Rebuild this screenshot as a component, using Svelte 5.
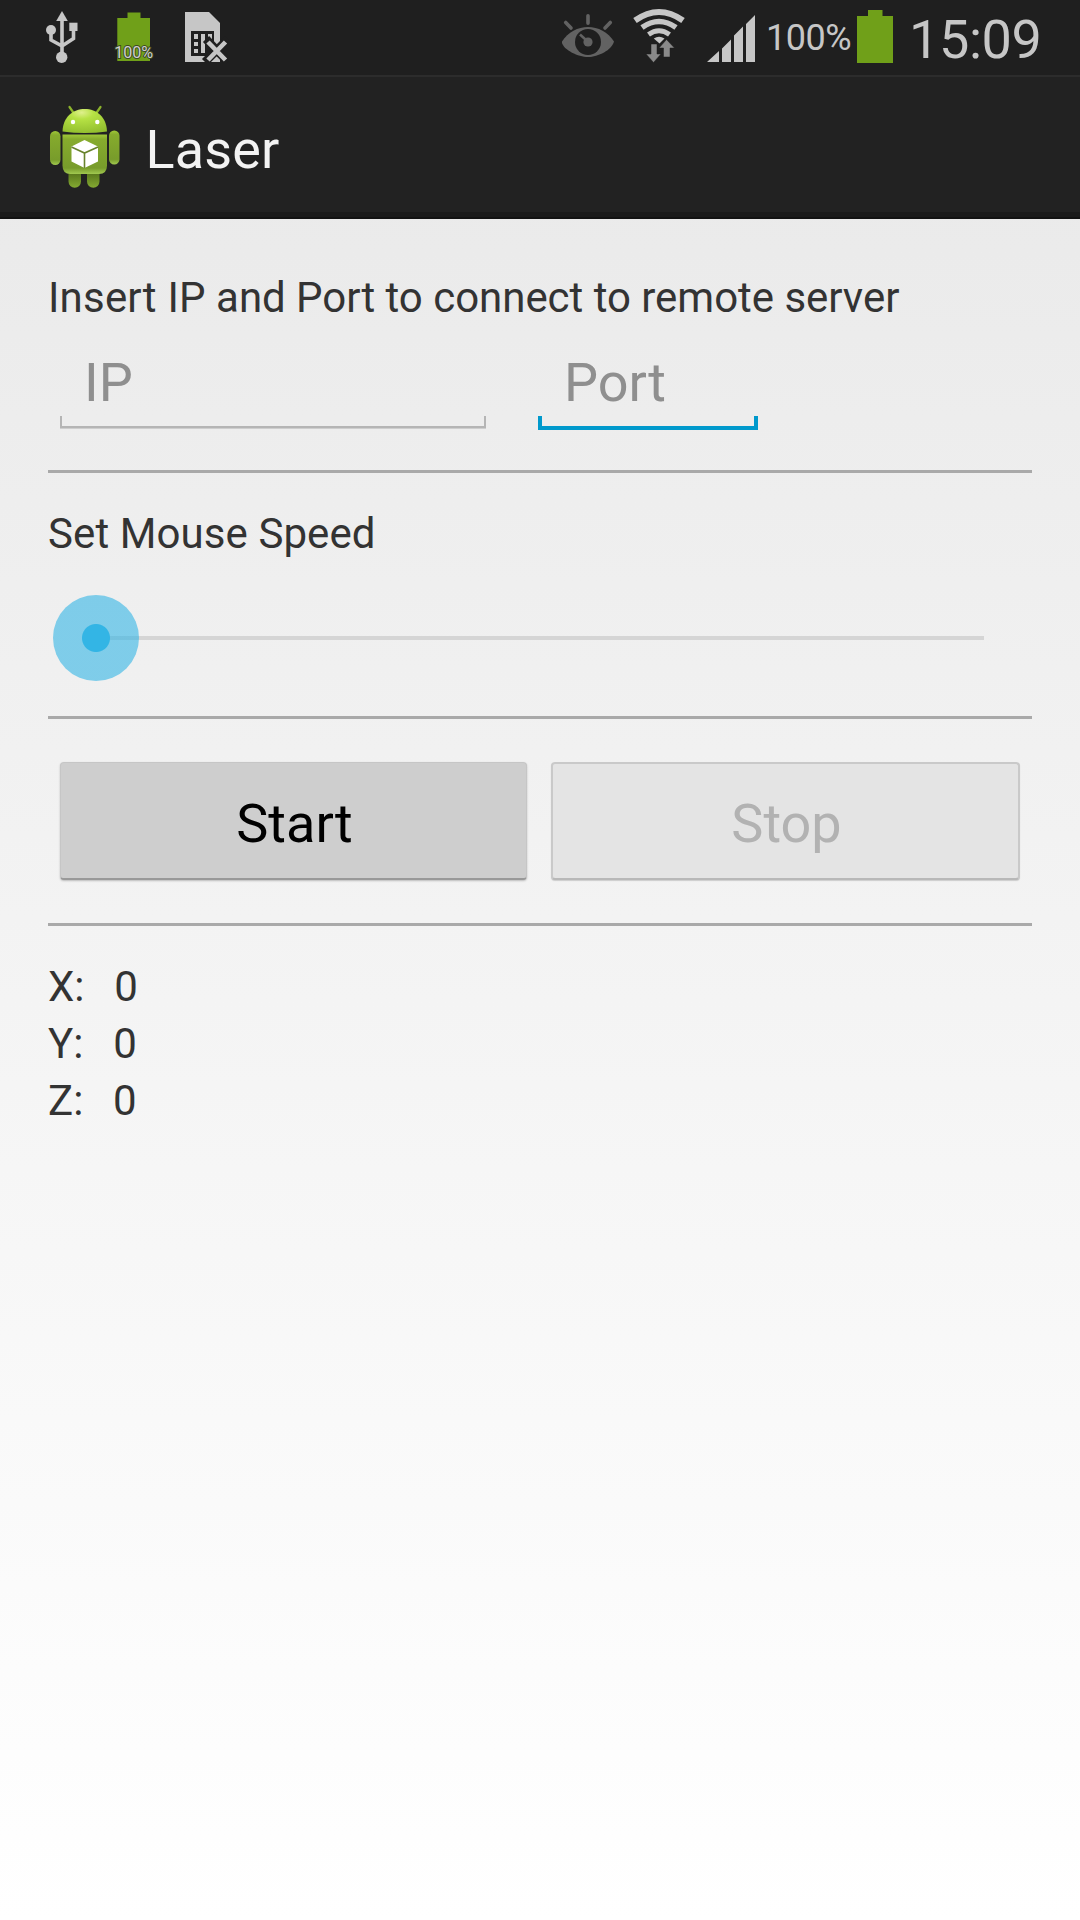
<script>
  let ip = $state('');
  let port = $state('');
  const axes = [
    { name: 'X', value: 0 },
    { name: 'Y', value: 0 },
    { name: 'Z', value: 0 }
  ];
</script>

<div class="screen">
  <header class="status">
    <svg class="usb" viewBox="45 10 34 54">
      <path d="M62 20V54M51 30V40L62 46M73.500 29V38.500L62 46" fill="none" stroke="#c6c6c6" stroke-width="3.600" />
      <path d="M62 11L67.800 21H56.200Z" fill="#c6c6c6" />
      <circle cx="51" cy="30" r="5" fill="#c6c6c6" />
      <circle cx="61.700" cy="57.300" r="5.700" fill="#c6c6c6" />
      <path d="M69.300 22.700h8.200v8.300h-8.200z" fill="#c6c6c6" />
    </svg>
    <svg class="charge" viewBox="112 10 43 54">
      <path d="M127.500 12.500h13v5.500h9.500v43h-32.700V18h10.200z" fill="#70a019" />
      <text class="tiny" x="133.700" y="58.300" text-anchor="middle" textLength="39" lengthAdjust="spacingAndGlyphs">100%</text>
    </svg>
    <svg class="sim" viewBox="183 10 46 54">
      <path d="M185 12h24l11 11v39h-35z" fill="#c6c6c6" />
      <path d="M191 31h23v25h-23z" fill="#1f1f1f" />
      <path d="M194 34h4v5h-4zM194 42h4v4h-4zM194 49h4v4h-4zM201 34h4v19h-4zM208 34h4v5h-4z" fill="#c6c6c6" />
      <path d="M206 39L228 62M228 39L205 62" stroke="#1f1f1f" stroke-width="8.500" />
      <path d="M208 42L225.500 60M225.500 42L208 60" stroke="#c6c6c6" stroke-width="4.600" />
    </svg>
    <span class="grow"></span>
    <svg class="eye" viewBox="560 10 56 54">
      <path d="M562 41.500C568 32 578 27 588 27S608 32 614 41.500C612 50 598 57 588 57S564 50 562 43Z" fill="#626262" />
      <circle cx="588" cy="42" r="13" fill="#1f1f1f" />
      <circle cx="588" cy="42" r="4.600" fill="#626262" />
      <path d="M580 34.500L586 40" stroke="#626262" stroke-width="2.500" />
      <path d="M588 15.800V23.200M565.700 22.500L571 28M610.300 22.500L605 28" stroke="#626262" stroke-width="3.600" stroke-linecap="round" />
    </svg>
    <svg class="wifi" viewBox="631 6 56 58">
      <g fill="none" stroke="#c6c6c6" stroke-width="6">
        <path d="M635 20.500Q659 3.500 683 20.500" />
        <path d="M642 27.500Q659 15.500 676 27.500" stroke-width="5.500" />
        <path d="M648.500 34.500Q659 27 669.500 34.500" stroke-width="5" />
      </g>
      <path d="M653.800 38.500Q659 35 664.500 38.500L659.500 43.500Z" fill="#c6c6c6" />
      <path d="M651 44h6v10h4L653.500 62.500L646 54h5zM666.500 39.500L674.500 48H670v9h-6.500V48H659z" fill="#8a8a8a" stroke="#1f1f1f" stroke-width=".5" />
    </svg>
    <svg class="signal" viewBox="706 10 50 54">
      <path d="M707 62L719 51V62zM722 48.500L731 39.500V62H722zM734 35.500L743 26.500V62H734zM746 24L755 15V62H746z" fill="#c6c6c6" />
    </svg>
    <span class="percent">100%</span>
    <svg class="battery" viewBox="857 10 36 54">
      <path d="M868 10h14.500v6H893v47H857V16h11z" fill="#70a019" />
    </svg>
    <time>15:09</time>
  </header>

  <div class="appbar">
    <svg class="robot" viewBox="48 104 72 86">
      <defs>
        <linearGradient id="skin" x1="0" y1="0" x2="0" y2="1">
          <stop offset="0" stop-color="#a0c838" />
          <stop offset=".12" stop-color="#86ab2d" />
          <stop offset=".85" stop-color="#789c2b" />
          <stop offset="1" stop-color="#a1c950" />
        </linearGradient>
        <linearGradient id="leg" x1="0" y1="0" x2="0" y2="1">
          <stop offset="0" stop-color="#55731a" />
          <stop offset="1" stop-color="#84aa32" />
        </linearGradient>
        <radialGradient id="head" cx=".43" cy=".15" r=".9">
          <stop offset="0" stop-color="#dff08c" />
          <stop offset=".3" stop-color="#b6e244" />
          <stop offset="1" stop-color="#91bd2e" />
        </radialGradient>
      </defs>
      <path d="M69.500 107L74 113.500M100.500 107L96 113.500" stroke="#8cb32c" stroke-width="2.200" stroke-linecap="round" />
      <path d="M68.500 172h12.500v9.500a6 6 0 0 1-12.500 0zM87 172h12.500v9.500a6 6 0 0 1-12.500 0z" fill="url(#leg)" />
      <rect x="50" y="131" width="10.500" height="34" rx="5.200" fill="url(#skin)" />
      <rect x="109" y="130.500" width="10.500" height="34" rx="5.200" fill="url(#skin)" />
      <path d="M62.500 134.500h44.500v31q0 8.500-8 8.500h-28.500q-8 0-8-8.500z" fill="url(#skin)" />
      <path d="M62.500 131.500C63 117 73 109 84.800 109S106.500 117 107 131.500Q85 134.500 62.500 131.500Z" fill="url(#head)" />
      <circle cx="73" cy="122" r="2.200" fill="#fff" />
      <circle cx="97.300" cy="122" r="2.200" fill="#fff" />
      <path d="M84.500 140L98 146.500V161.500L84.500 168L71.500 161.500V146.500Z" fill="#fff" />
      <path d="M71.500 147L84.500 153L98 147M84.500 153V168" fill="none" stroke="#68832d" stroke-width="1.600" />
    </svg>
    <h1>Laser</h1>
  </div>

  <main>
    <p class="intro"><span>Insert IP</span>{' and Port to connect to remote server'}</p>
    <div class="fields">
      <label class="field ip"><input placeholder="IP" bind:value={ip} /><i></i></label>
      <label class="field port"><input placeholder="Port" bind:value={port} /><i></i></label>
    </div>
    <hr />
    <p class="speed">Set Mouse Speed</p>
    <div class="slider">
      <span class="track"></span>
      <span class="thumb"></span>
    </div>
    <hr />
    <div class="buttons">
      <button class="start">Start</button>
      <button class="stop" disabled>Stop</button>
    </div>
    <hr />
    <div class="axes">
      {#each axes as axis}
        <p>{axis.name}:<span>{'   ' + axis.value}</span></p>
      {/each}
    </div>
  </main>
</div>

<style>
  :global(body) { margin: 0; }
  .screen {
    width: 1080px;
    height: 1920px;
    overflow: hidden;
    background: linear-gradient(#e8e8e8, #fff);
    font-family: Roboto, sans-serif;
    color: #333;
  }
  svg { display: block; flex: none; }
  p, h1 { margin: 0; font-weight: 400; white-space: pre; }
  .status {
    box-sizing: border-box;
    height: 75px;
    display: flex;
    padding: 10px 0 0 45px;
    background: #1f1f1f;
    color: #c6c6c6;
  }
  .usb { width: 34px; height: 54px; }
  .charge { width: 43px; height: 54px; margin-left: 33px; }
  .tiny { font-size: 17px; fill: #cfcfcf; stroke: #3c4a20; stroke-width: 2px; paint-order: stroke; }
  .sim { width: 46px; height: 54px; margin-left: 28px; }
  .grow { flex: 1; }
  .eye { width: 56px; height: 54px; }
  .wifi { width: 56px; height: 58px; margin: -4px 0 0 15px; }
  .signal { width: 50px; height: 54px; margin-left: 19px; }
  .percent { width: 91px; margin-left: 10px; font-size: 36px; line-height: 56px; letter-spacing: -.5px; }
  .battery { width: 36px; height: 54px; }
  time { width: 171px; margin-left: 16px; font-size: 54px; line-height: 59px; letter-spacing: -.4px; }
  .appbar {
    box-sizing: border-box;
    height: 144px;
    display: flex;
    padding: 29px 0 0 48px;
    background: linear-gradient(#2c2c2c 0 2px, #222 2px 137px, #1b1b1b 137px 142px, #131313 142px);
  }
  .robot { width: 72px; height: 86px; }
  h1 { margin-left: 25.500px; font-size: 54px; line-height: 91px; letter-spacing: .15px; color: #f3f3f3; }
  main { padding: 50px 48px 0; }
  .intro, .speed, .axes p { font-size: 42px; line-height: 57px; height: 57px; }
  .intro { letter-spacing: -.03px; }
  .intro span { letter-spacing: .2px; }
  .fields { display: flex; height: 144px; padding-left: 12px; }
  .field { display: block; height: 105px; }
  .ip { width: 426px; color: #b5b5b5; }
  .port { width: 220px; margin-left: 52px; color: #0099cc; }
  input {
    display: block;
    box-sizing: border-box;
    width: 100%;
    height: 90px;
    padding: 23px 0 0 24px;
    border: 0;
    outline: 0;
    background: none;
    font: 54px Roboto, sans-serif;
    color: #333;
  }
  .port input { padding-left: 26px; }
  input::placeholder { color: #8f8f8f; opacity: 1; }
  i { display: block; box-sizing: border-box; height: 12px; border: 2px solid; border-top: 0; box-shadow: 0 1px 0 #cecece; }
  .port i { height: 14px; border-width: 4px; border-top: 0; box-shadow: none; }
  hr { margin: 0; height: 3px; border: 0; background: #a9a9a9; }
  .speed { padding-top: 32px; letter-spacing: .09px; }
  .slider { box-sizing: border-box; height: 154px; display: grid; align-items: center; padding: 0 48px 2px; }
  .slider span { grid-area: 1 / 1; }
  .track { height: 4px; background: #d5d5d5; }
  .thumb {
    width: 86px;
    height: 86px;
    margin-left: -43px;
    border-radius: 50%;
    background: radial-gradient(circle, #33b5e5 13.500px, rgba(51, 181, 229, .6) 14.500px);
  }
  .buttons { display: flex; gap: 24px; padding: 43px 12px; height: 118px; }
  button {
    flex: 1;
    box-sizing: border-box;
    height: 118px;
    border: 1px solid #c6c6c6;
    border-bottom: 2px solid #999;
    border-radius: 4px;
    padding: 5px 0 0 2px;
    background: #cecece;
    font: 54px Roboto, sans-serif;
    color: #000;
    box-shadow: 0 1px 2px #bbb;
  }
  .stop { border: 2px solid #c9c9c9; border-bottom-color: #b8b8b8; padding-top: 4px; background: #e4e4e4; color: #b2b2b2; box-shadow: 0 1px 1px #ccc; }
  .axes { padding-top: 32px; }
  .axes span { letter-spacing: -.5px; }
</style>
